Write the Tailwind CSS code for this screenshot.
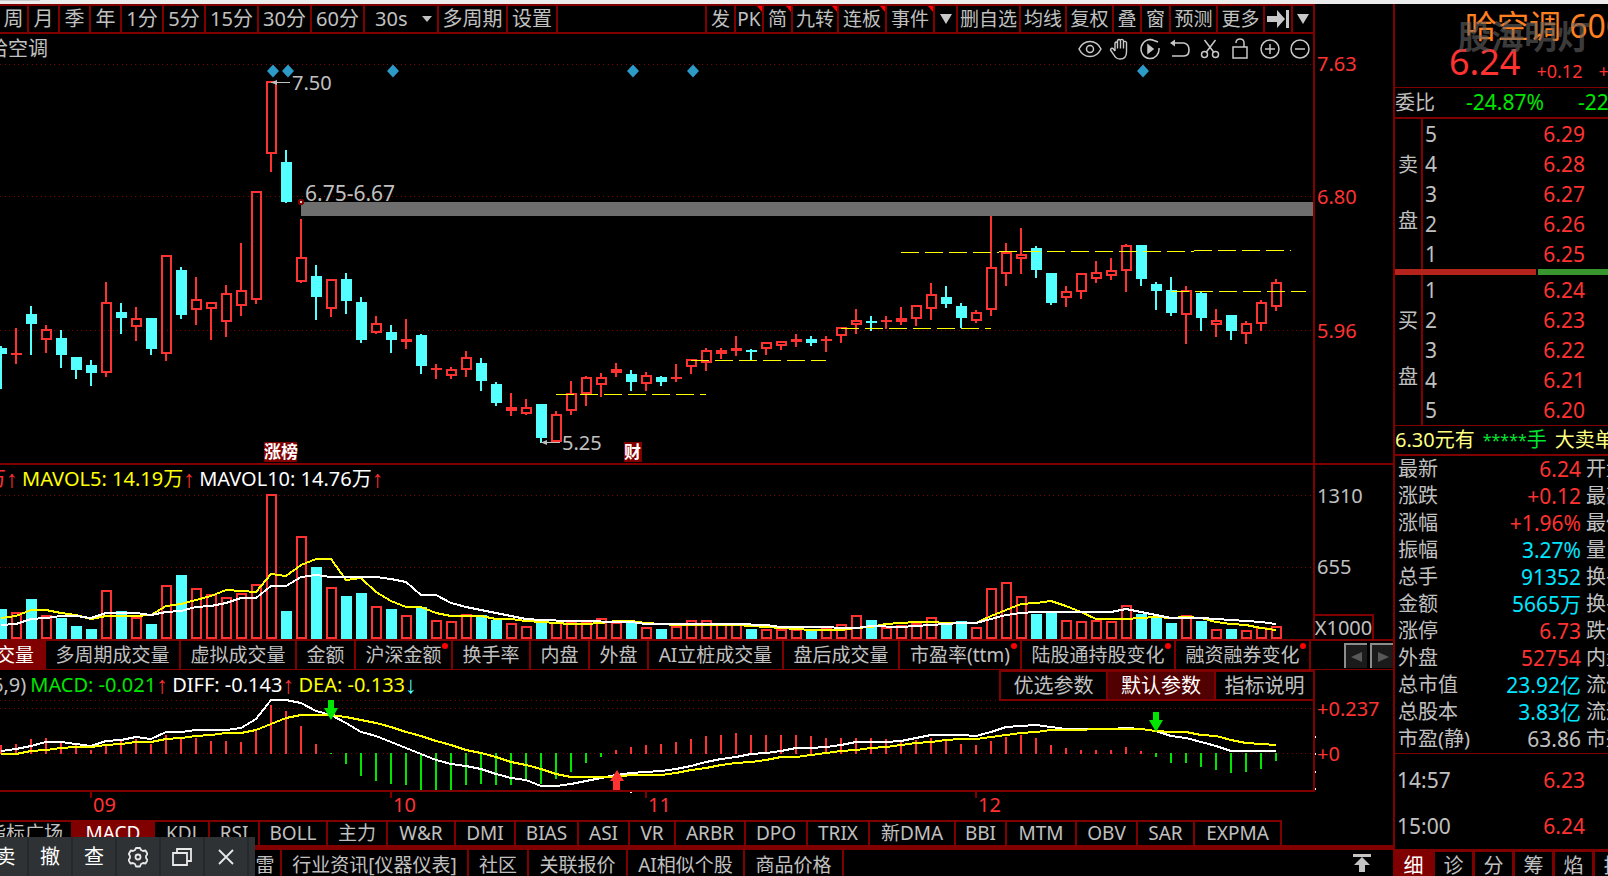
<!DOCTYPE html>
<html lang="zh-CN">
<head>
<meta charset="utf-8">
<title>哈空调 - K线</title>
<script src="https://cdn.jsdelivr.net/npm/@tailwindcss/browser@4"></script>
</head>
<body class="bg-black text-[#c0c0c0] font-['Noto_Sans','Noto_Sans_CJK_SC',sans-serif] text-xl leading-none overflow-hidden">
<div class="flex min-h-screen flex-col">
<div class="h-1 shrink-0 bg-[#ececec]"><div class="h-px w-10 bg-[#c8c8c8]"></div></div>
<div class="flex flex-1">

<main class="flex min-w-0 flex-1 flex-col">
  <!-- period toolbar -->
  <header class="flex h-[30px] items-stretch border-y-2 border-t-[#800000] border-b-[#800000] mr-[78px] whitespace-nowrap">
    <nav class="flex [&>button]:border-r-2 [&>button]:border-[#800000]" aria-label="周期">
      <button class="w-[29px]">周</button>
      <button class="w-[31px]">月</button>
      <button class="w-[31px]">季</button>
      <button class="w-[31px]">年</button>
      <button class="w-[42px]">1分</button>
      <button class="w-[42px]">5分</button>
      <button class="w-[53px]">15分</button>
      <button class="w-[53px]">30分</button>
      <button class="w-[53px]">60分</button>
      <div class="relative w-[74px] border-r-2 border-[#800000]">
        <select aria-label="秒周期" class="h-full w-full appearance-none bg-black pl-[10px]"><option>30s</option></select>
        <svg class="pointer-events-none absolute right-1 top-[9px]" width="12" height="8"><path d="M1 1h10L6 7z" fill="#c0c0c0"/></svg>
      </div>
      <button class="w-[69px]">多周期</button>
      <button class="w-[50px]">设置</button>
    </nav>
    <nav class="ml-auto flex text-[19px] [&>button]:relative [&>button]:border-l-2 [&>button]:border-[#800000]" aria-label="工具">
      <button class="w-[29px]">发</button>
      <button class="w-7">PK<svg class="absolute right-0 top-0" width="5" height="6"><path d="M0 0h5v6z" fill="#f00"/></svg></button>
      <button class="w-[29px]">简<svg class="absolute right-0 top-0" width="5" height="6"><path d="M0 0h5v6z" fill="#f00"/></svg></button>
      <button class="w-[46px]">九转<svg class="absolute right-0 top-0" width="5" height="6"><path d="M0 0h5v6z" fill="#f00"/></svg></button>
      <button class="w-12">连板<svg class="absolute right-0 top-0" width="5" height="6"><path d="M0 0h5v6z" fill="#f00"/></svg></button>
      <button class="w-12">事件<svg class="absolute right-0 top-0" width="5" height="6"><path d="M0 0h5v6z" fill="#f00"/></svg></button>
      <button class="flex w-[23px] items-center justify-center" aria-label="事件菜单"><svg width="14" height="12"><path d="M1 1h12L7 11z" fill="#c8c8c8"/></svg></button>
      <button class="w-[63px]">删自选</button>
      <button class="w-[46px]">均线</button>
      <button class="w-[47px]">复权</button>
      <button class="w-[28px]">叠</button>
      <button class="w-[29px]">窗</button>
      <button class="w-[47px]">预测</button>
      <button class="w-[47px]">更多</button>
      <button class="flex w-7 items-center justify-center" aria-label="最新"><svg class="shrink-0" width="24" height="20"><path d="M1 7h10V1l8 9-8 9v-6H1zM20 1h3v18h-3z" fill="#c8c8c8"/></svg></button>
      <button class="flex w-6 items-center justify-center border-r-2" aria-label="工具菜单"><svg width="14" height="12"><path d="M1 1h12L7 11z" fill="#c8c8c8"/></svg></button>
    </nav>
  </header>

  <!-- candles -->
  <section class="relative h-[431px] border-b-2 border-[#800000]">
    <svg id="k" class="block h-full w-full" font-size="20" fill="#c0c0c0"></svg>
    <div class="absolute inset-x-0 top-0 flex h-[30px] items-center justify-between pr-[78px]">
      <h1 class="-ml-3">哈空调</h1>
      <div class="flex [&>button]:flex [&>button]:h-[30px] [&>button]:w-[30px] [&>button]:items-center [&>button]:justify-center">
        <button aria-label="显示"><svg width="24" height="20" fill="none" stroke="#c8c8c8" stroke-width="1.5"><path d="M1 10C6 0 18 0 23 10C18 20 6 20 1 10z"/><circle cx="12" cy="10" r="3.5"/></svg></button>
        <button aria-label="拖动"><svg width="22" height="22" fill="none" stroke="#c8c8c8" stroke-width="1.4"><path d="M6 13V5q1-2 2.500 0V2.500q1.500-2 3 0V2q1.500-1.500 3 .5V4q2-1.500 3 .5V14q0 7-6.500 7-4 0-6-4L1.500 12q.5-2.500 2.500-1.500L6 13M8.500 5v5.500M11.500 3v7.500M14.500 4v6.500"/></svg></button>
        <button aria-label="回放"><svg width="22" height="22" fill="none" stroke="#c8c8c8" stroke-width="1.5"><path d="M15 2.500A9 9.500 0 1 0 20 10M15 2.500l-4-1M15 2.500l4 1.500"/><path d="M9 7v8l5-4z" fill="#c8c8c8"/></svg></button>
        <button aria-label="撤销"><svg width="22" height="20" fill="none" stroke="#c8c8c8" stroke-width="1.6"><path d="M4 4h11q5 1 5 7t-5 6H3"/><path d="M1 4l5-3.500v7z" fill="#c8c8c8" stroke="none"/></svg></button>
        <button aria-label="剪切"><svg width="20" height="20" fill="none" stroke="#c8c8c8" stroke-width="1.5"><path d="M4.500 1L14 13.500M15.500 1L6 13.500"/><circle cx="4.500" cy="15.500" r="3"/><circle cx="15.500" cy="15.500" r="3"/></svg></button>
        <button aria-label="锁定"><svg width="18" height="22" fill="none" stroke="#c8c8c8" stroke-width="1.500"><path d="M2 9h14v11H2zM5 5q0-4 4-4t4 4v4"/></svg></button>
        <button aria-label="放大"><svg width="22" height="22" fill="none" stroke="#c8c8c8" stroke-width="1.500"><circle cx="11" cy="11" r="9"/><path d="M6 11h10M11 6v10"/></svg></button>
        <button aria-label="缩小"><svg width="22" height="22" fill="none" stroke="#c8c8c8" stroke-width="1.500"><circle cx="11" cy="11" r="9"/><path d="M6 11h10"/></svg></button>
      </div>
    </div>
  </section>

  <!-- volume -->
  <section class="relative h-44 border-b-2 border-[#800000]">
    <svg id="v" class="block h-full w-full" font-size="20" fill="#c0c0c0"></svg>
    <p class="absolute left-0 top-0 flex h-7 items-center gap-1 overflow-hidden whitespace-nowrap [&>span]:flex [&>span]:items-center">
      <span class="-ml-[14px] text-[#ff3232]">万<span class="font-['Liberation_Sans'] text-2xl leading-none">↑</span></span>
      <span class="text-[#ffff00]">MAVOL5: 14.19万<span class="font-['Liberation_Sans'] text-2xl leading-none text-[#ff3232]">↑</span></span>
      <span class="text-white">MAVOL10: 14.76万<span class="font-['Liberation_Sans'] text-2xl leading-none text-[#ff3232]">↑</span></span>
    </p>
    <span class="absolute bottom-0 right-[19px] flex h-[25px] w-[61px] items-center justify-center border-2 border-b-0 border-[#800000]">X1000</span>
  </section>

  <!-- volume indicator tabs -->
  <nav class="flex h-[29px] whitespace-nowrap border-b border-[#800000] text-[19px] [&>button]:relative [&>button]:border-r-2 [&>button]:border-[#800000]" aria-label="成交量指标">
    <button class="flex w-[46px] justify-end bg-[#800000] pr-[10px] items-center overflow-hidden text-white">成交量</button>
    <button class="w-[135px]">多周期成交量</button>
    <button class="w-[116px]">虚拟成交量</button>
    <button class="w-[59px]">金额</button>
    <button class="w-[97px]">沪深金额<i class="absolute right-[3px] top-[2px] size-[6px] rounded-full bg-[#ff0000]"></i></button>
    <button class="w-[78px]">换手率</button>
    <button class="w-[59px]">内盘</button>
    <button class="w-[59px]">外盘</button>
    <button class="w-[135px]">AI立桩成交量</button>
    <button class="w-[116px]">盘后成交量</button>
    <button class="w-[122px]">市盈率(ttm)<i class="absolute right-[3px] top-[2px] size-[6px] rounded-full bg-[#ff0000]"></i></button>
    <button class="w-[154px]">陆股通持股变化<i class="absolute right-[3px] top-[2px] size-[6px] rounded-full bg-[#ff0000]"></i></button>
    <button class="w-[135px]">融资融券变化<i class="absolute right-[3px] top-[2px] size-[6px] rounded-full bg-[#ff0000]"></i></button>
    <div class="ml-auto flex gap-[3px] pt-[2px]">
      <button class="flex h-[25px] w-[23px] items-center justify-center border-l-2 border-t-2 border-[#8c8c8c] bg-[#1a1a1a]" aria-label="向左"><svg width="12" height="10"><path d="M11 0v10L0 5z" fill="#585858"/></svg></button>
      <button class="flex h-[25px] w-[23px] items-center justify-center border-l-2 border-t-2 border-[#8c8c8c] bg-[#1a1a1a]" aria-label="向右"><svg width="12" height="10"><path d="M1 0v10l11-5z" fill="#585858"/></svg></button>
    </div>
  </nav>

  <!-- MACD and dates -->
  <section class="relative h-[150px]">
    <svg id="m" class="block h-full w-full" font-size="20" fill="#ff3232"></svg>
    <p class="absolute left-0 top-0 flex h-[30px] items-center gap-1 whitespace-nowrap overflow-hidden [&>span]:flex [&>span]:items-center">
      <span class="-ml-2">6,9)</span>
      <span class="text-[#00e600]">MACD: -0.021<span class="font-['Liberation_Sans'] text-2xl leading-none text-[#ff3232]">↑</span></span>
      <span class="text-white">DIFF: -0.143<span class="font-['Liberation_Sans'] text-2xl leading-none text-[#ff3232]">↑</span></span>
      <span class="text-[#ffff00]">DEA: -0.133<span class="font-['Liberation_Sans'] text-2xl leading-none text-[#50ffff]">↓</span></span>
    </p>
    <div class="absolute right-[78px] top-0 flex h-[31px] border-2 border-[#800000] bg-black">
      <button class="w-[107px] border-r-2 border-[#800000]">优选参数</button>
      <button class="w-[108px] border-r-2 border-[#800000] bg-[#500000] text-white">默认参数</button>
      <button class="w-[97px]">指标说明</button>
    </div>
  </section>

  <!-- indicator tabs -->
  <nav class="flex h-[30px] whitespace-nowrap border-b-[5px] border-[#800000] text-[19px] [&>button]:border-r-2 [&>button]:border-t-2 [&>button]:border-[#800000]" aria-label="技术指标">
    <button class="flex w-[73px] items-center justify-end pr-2 overflow-hidden">指标广场</button>
    <button class="w-[82px] bg-[#800000] text-white">MACD</button>
    <button class="w-[55px]">KDJ</button>
    <button class="w-[50px]">RSI</button>
    <button class="w-[68px]">BOLL</button>
    <button class="w-[60px]">主力</button>
    <button class="w-[68px]">W&amp;R</button>
    <button class="w-[60px]">DMI</button>
    <button class="w-[63px]">BIAS</button>
    <button class="w-[51px]">ASI</button>
    <button class="w-[46px]">VR</button>
    <button class="w-[70px]">ARBR</button>
    <button class="w-[62px]">DPO</button>
    <button class="w-[62px]">TRIX</button>
    <button class="w-[86px]">新DMA</button>
    <button class="w-[51px]">BBI</button>
    <button class="w-[70px]">MTM</button>
    <button class="w-[61px]">OBV</button>
    <button class="w-[57px]">SAR</button>
    <button class="w-[87px]">EXPMA</button>
  </nav>

  <!-- bottom links and order bar -->
  <div class="relative flex min-h-[26px] flex-1 items-stretch whitespace-nowrap">
    <nav class="flex pl-[250px] text-[19px] [&>a]:flex [&>a]:items-center [&>a]:justify-center [&>a]:border-r-2 [&>a]:border-[#800000] [&>a]:pt-1" aria-label="资讯">
      <a href="#" class="w-8">雷</a>
      <a href="#" class="w-[187px]">行业资讯[仪器仪表]</a>
      <a href="#" class="w-[60px]">社区</a>
      <a href="#" class="w-[99px]">关联报价</a>
      <a href="#" class="w-[117px]">AI相似个股</a>
      <a href="#" class="w-[99px]">商品价格</a>
    </nav>
    <button class="ml-auto mr-[22px] flex w-[18px] items-center" aria-label="置顶"><svg width="18" height="20"><path d="M0 1h18v3H0zM9 4l8 8h-5v7H6v-7H1z" fill="#c4c4c4"/></svg></button>
    <div class="absolute bottom-0 left-0 flex h-[39px] bg-[#2e3235] pr-[6px] text-white [&>button]:flex [&>button]:items-center [&>button]:justify-center [&>button]:border-r-2 [&>button]:border-[#25282c]">
      <button class="w-[29px] overflow-hidden"><span class="-ml-4">卖</span></button>
      <button class="w-11">撤</button>
      <button class="w-11">查</button>
      <button class="w-11" aria-label="设置"><svg width="20" height="22" viewBox="0 0 20 22" fill="none" stroke="#e8e8e8" stroke-width="1.800" stroke-linejoin="round"><path d="M7 4L8 2h4l1 2 2 1 2.500-.5 2 3.500L18 10v2l1.500 2-2 3.500L15 17l-2 1-1 2.500H8L7 18l-2-1-2.500.5-2-3.500L2 12v-2L.8 8l2-3.500L5 5z"/><circle cx="10" cy="11" r="2.500"/></svg></button>
      <button class="w-11" aria-label="还原"><svg width="20" height="18" fill="none" stroke="#e8e8e8" stroke-width="1.800"><path d="M1 5h14v12H1zM5 5V1h14v12h-4"/></svg></button>
      <button class="w-11" aria-label="关闭"><svg width="16" height="16" stroke="#e8e8e8" stroke-width="1.800"><path d="M1 1l14 14M15 1L1 15"/></svg></button>
    </div>
  </div>
</main>

<aside class="flex w-[215px] shrink-0 flex-col overflow-hidden whitespace-nowrap border-l-2 border-[#800000]">
  <div class="relative h-[84px] border-b border-[#800000] pl-[54px]">
    <div class="pl-4 pt-[6px] text-[32px] text-[#ff8020]">哈空调 600202</div>
    <div class="flex items-end gap-4 text-[#ff3232]"><span class="text-4xl">6.24</span><span class="text-lg leading-[22px]">+0.12</span><span class="text-lg leading-[22px]">+1.96%</span></div>
    <div class="absolute left-[63px] top-4 text-[33px] font-bold text-[#646464]/60">股海明灯</div>
  </div>
  <div class="flex h-[31px] items-center border-b-2 border-[#800000] text-[21px] text-[#00e600]"><span class="w-[71px] shrink-0 text-xl text-[#c0c0c0]">委比</span><span class="w-28 shrink-0">-24.87%</span><span>-2295</span></div>
  <div class="flex h-[150px]">
    <div class="flex w-7 flex-col items-center border-r-2 border-[#800000] pt-9"><span>卖</span><span class="pt-9">盘</span></div>
    <table class="w-[162px] text-[21px]"><tbody>
      <tr><td class="pl-[2px]">5</td><td class="text-right text-[#ff3232]">6.29</td></tr>
      <tr><td class="pl-[2px]">4</td><td class="text-right text-[#ff3232]">6.28</td></tr>
      <tr><td class="pl-[2px]">3</td><td class="text-right text-[#ff3232]">6.27</td></tr>
      <tr><td class="pl-[2px]">2</td><td class="text-right text-[#ff3232]">6.26</td></tr>
      <tr><td class="pl-[2px]">1</td><td class="text-right text-[#ff3232]">6.25</td></tr>
    </tbody></table>
  </div>
  <div class="flex h-[6px] gap-[2px]"><div class="w-[141px] bg-[#b4231c]"></div><div class="flex-1 bg-[#37962d]"></div></div>
  <div class="flex h-[151px] border-b border-[#800000]">
    <div class="flex w-7 flex-col items-center border-r-2 border-[#800000] pt-9"><span>买</span><span class="pt-9">盘</span></div>
    <table class="w-[162px] text-[21px]"><tbody>
      <tr><td class="pl-[2px]">1</td><td class="text-right text-[#ff3232]">6.24</td></tr>
      <tr><td class="pl-[2px]">2</td><td class="text-right text-[#ff3232]">6.23</td></tr>
      <tr><td class="pl-[2px]">3</td><td class="text-right text-[#ff3232]">6.22</td></tr>
      <tr><td class="pl-[2px]">4</td><td class="text-right text-[#ff3232]">6.21</td></tr>
      <tr><td class="pl-[2px]">5</td><td class="text-right text-[#ff3232]">6.20</td></tr>
    </tbody></table>
  </div>
  <div class="flex h-[30px] items-center gap-2 border-b-2 border-[#800000] text-[#ffff80]"><span>6.30元有</span><span class="flex items-center text-[#00e632]"><span class="text-base">*****</span>手</span><span>大卖单</span></div>
  <table class="h-[298px] w-[232px] table-fixed border-b border-[#800000]"><tbody>
    <tr><td class="w-[86px] pl-[3px]">最新</td><td class="w-[100px] text-right text-[21px] text-[#ff3232]">6.24</td><td class="pl-[5px]">开盘</td></tr>
    <tr><td class="pl-[3px]">涨跌</td><td class="text-right text-[21px] text-[#ff3232]">+0.12</td><td class="pl-[5px]">最高</td></tr>
    <tr><td class="pl-[3px]">涨幅</td><td class="text-right text-[21px] text-[#ff3232]">+1.96%</td><td class="pl-[5px]">最低</td></tr>
    <tr><td class="pl-[3px]">振幅</td><td class="text-right text-[21px] text-[#00e6ff]">3.27%</td><td class="pl-[5px]">量比</td></tr>
    <tr><td class="pl-[3px]">总手</td><td class="text-right text-[21px] text-[#00e6ff]">91352</td><td class="pl-[5px]">换手</td></tr>
    <tr><td class="pl-[3px]">金额</td><td class="text-right text-[21px] text-[#00e6ff]">5665万</td><td class="pl-[5px]">换手</td></tr>
    <tr><td class="pl-[3px]">涨停</td><td class="text-right text-[21px] text-[#ff3232]">6.73</td><td class="pl-[5px]">跌停</td></tr>
    <tr><td class="pl-[3px]">外盘</td><td class="text-right text-[21px] text-[#ff3232]">52754</td><td class="pl-[5px]">内盘</td></tr>
    <tr><td class="pl-[3px]">总市值</td><td class="text-right text-[21px] text-[#00e6ff]">23.92亿</td><td class="pl-[5px]">流值</td></tr>
    <tr><td class="pl-[3px]">总股本</td><td class="text-right text-[21px] text-[#00e6ff]">3.83亿</td><td class="pl-[5px]">流通</td></tr>
    <tr><td class="pl-[3px]">市盈(静)</td><td class="text-right text-[21px]">63.86</td><td class="pl-[5px]">市盈</td></tr>
  </tbody></table>
  <table class="mt-[3px] h-[92px] w-[190px] text-[21px]"><tbody>
    <tr><td class="pl-[2px]">14:57</td><td class="text-right text-[#ff3232]">6.23</td></tr>
    <tr><td class="pl-[2px]">15:00</td><td class="text-right text-[#ff3232]">6.24</td></tr>
  </tbody></table>
  <nav class="flex flex-1 border-t-[3px] border-[#800000] [&>button]:w-10 [&>button]:shrink-0 [&>button]:border-r-[3px] [&>button]:border-[#800000] [&>button]:pt-1" aria-label="明细">
    <button class="bg-[#800000] text-white">细</button>
    <button>诊</button>
    <button>分</button>
    <button>筹</button>
    <button>焰</button>
    <button>扩</button>
  </nav>
</aside>
</div>
</div>

<script>
const R='#ff3232',C='#54ffff',D='#800000',Y='#ffff00',G='#00e600';
const rect=(x,y,w,h,f)=>`<rect x="${x}" y="${y}" width="${w}" height="${h}" fill="${f}"/>`;
const box=(k,t,b)=>b-t<5?rect(15*k-4,t,11,b-t,R):`<rect x="${15*k-3}" y="${t+1}" width="9" height="${b-t-2}" fill="none" stroke="${R}" stroke-width="2"/>`;
const right=(y,h)=>`<svg x="100%" overflow="visible">${rect(-80,y,2,h,D)}</svg>`;
const dots=y=>`<svg y="${y}" height="1" width="100%"><line x2="1312" y1=".5" y2=".5" stroke="${D}" stroke-dasharray="1 4 1 3"/></svg>`;
const text=(x,y,s,f)=>`<text x="${x}" y="${y}"${f?` fill="${f}"`:''}>${s}</text>`;
const axis=(y,s,f)=>`<svg x="100%" overflow="visible">${text(-76,y,s,f)}</svg>`;
const line=(s,c)=>`<polyline fill="none" stroke="${c}" stroke-width="2" points="${s.trim().split(/\s+/).map(p=>{const[k,y]=p.split(':');return(15*k+1)+','+y}).join(' ')}"/>`;
const up='shape-rendering="crispEdges"';

// high, body top, body bottom, low; c = falling day
const candles=`346 348 354 389 c|328 353 355 364|306 314 324 355 c|325 329 340 353|330 338 355 368 c|357 357 370 379 c|360 365 373 386 c|282 302 373 377|303 312 318 334 c|307 318 327 341|318 318 349 355 c|255 255 354 361|267 270 315 319 c|277 299 310 325|302 302 309 340|285 293 322 337|243 290 306 316|191 191 300 304|81 81 154 172|150 162 202 203 c|219 257 282 283|265 276 297 320 c|279 279 309 317|273 279 301 314 c|297 302 340 343 c|316 323 333 334|325 332 340 353 c|319 339 342 349|334 335 366 374 c|364 368 370 379|367 369 376 379|351 357 370 377|358 363 381 391 c|382 384 403 406 c|393 407 411 416|399 407 414 415|404 404 438 443 c|411 414 442 442|381 393 411 415|376 377 394 406|373 377 385 397|363 369 373 377|370 374 382 391 c|372 375 384 391|376 377 382 386 c|364 377 379 382|359 359 367 374|348 350 363 371|348 350 354 359|336 348 351 356|349 350 352 360 c|342 342 349 355|341 341 346 350|334 339 342 347|336 339 343 346 c|336 339 341 352|327 327 336 343|309 320 325 334|316 321 323 331 c|316 320 322 329|307 318 322 325|305 305 319 326|283 294 309 320|286 297 304 308 c|303 306 318 328 c|310 312 321 323|216 267 310 316|243 252 274 286|228 254 259 274|246 248 270 278 c|273 273 303 305 c|286 291 298 307|273 273 292 299|261 272 279 283|258 270 276 280|244 245 271 292|245 245 279 286 c|282 284 291 310 c|277 290 313 316 c|286 290 315 344|292 293 318 331 c|309 320 325 337|315 315 331 340 c|321 323 334 344|300 302 324 331|279 282 307 311`.split('|').map(s=>s.split(' '));
let s='';
s+=dots(64)+dots(196)+dots(330);
candles.forEach(([h,t,b,l,c],k)=>{
  h=+h;t=+t;b=+b;l=+l;const col=c?C:R;
  s+=rect(15*k,h,2,t-h,col)+rect(15*k,b,2,l-b,col)+(c?rect(15*k-4,t,11,b-t,C):box(k,t,b));
});
s+=rect(301,202,1013,14,'#6e6e6e');
s+=`<circle cx="301" cy="202" r="2" fill="#ccc" stroke="${D}" stroke-width="2"/>`;
[[556,706,394],[691,826,360],[841,991,328],[901,999,252],[999,1194,251],[1194,1291,250],[1171,1306,291]].forEach(([a,b,y])=>s+=`<line x1="${a}" x2="${b}" y1="${y+.5}" y2="${y+.5}" stroke="${Y}" stroke-dasharray="18 6"/>`);
let o='';
[273,288,393,633,693,1143].forEach(x=>o+=`<path d="M${x} 64.500l6 6.500-6 6.500-6-6.500z" fill="#2d9bc8"/>`);
[[271,82.5],[541,442.5]].forEach(([x,y])=>o+=`<path d="M${x} ${y}h19" stroke="#c0c0c0"/><path d="M${x} ${y}l6-2.500v5z"/>`);
o+=text(292,90,'7.50')+`<g font-size="21">${text(305,201,'6.75-6.67')}</g>`+text(562,450,'5.25');
o+=rect(264,442,33,20,D)+rect(624,442,18,20,D)+`<g font-size="17" fill="#fff" font-weight="bold"><text x="264" y="458">涨榜</text><text x="624" y="458">财</text></g>`;
o+=axis(71,'7.63',R)+axis(204,'6.80',R)+axis(338,'5.96',R);
document.getElementById('k').innerHTML=`<g transform="translate(0,-34)"><g ${up}>${s}${right(34,430)}</g>${o}</g>`;

const vol=[609,612,599,615,618,626,629,590,611,617,624,585,575,588,594,597,593,584,494,611,536,567,587,596,593,606,609,615,607,620,621,614,615,620,623,626,623,622,622,621,618,622,622,627,629,626,620,620,623,624,629,629,629,629,630,628,624,615,620,627,625,623,617,623,621,627,588,582,596,614,612,620,621,620,621,605,614,618,623,615,621,629,629,630,627,626];
s=dots(495)+dots(567);
vol.forEach((y,k)=>s+=candles[k][4]?rect(15*k-4,y,11,639-y,C):box(k,y,639));
s+=line('0:618 1:616 2:610 3:610 4:613 5:615 6:619 7:616 8:616 9:616 10:615 11:606 12:604 13:600 14:596 15:590 16:591 17:592 18:574 19:576 20:565 21:559 22:559 23:580 24:578 25:592 26:601 27:607 28:607 29:613 30:616 31:616 32:616 33:619 34:619 35:621 36:622 38:624 39:624 40:623 41:621 42:621 43:623 44:624 45:625 49:625 50:626 51:627 53:629 54:630 56:630 57:628 58:627 59:624 60:623 61:622 62:622 63:623 65:623 66:616 67:610 68:604 69:603 70:601 71:606 72:612 73:619 75:619 76:618 77:617 78:618 79:617 80:618 81:622 82:624 83:625 84:628 85:630',Y);
s+=line('0:625 1:624 2:619 3:618 4:616 5:616 6:618 7:613 9:613 10:615 11:612 12:611 13:607 14:606 15:603 16:598 17:598 18:586 19:586 20:577 21:575 22:577 25:577 26:579 27:582 28:595 29:595 30:603 31:607 32:610 33:613 34:616 35:619 36:620 38:621 42:622 43:624 49:624 51:625 52:627 54:627 57:628 58:626 60:627 62:625 64:623 65:623 66:619 67:615 68:613 69:612 74:612 75:609 76:612 77:615 78:618 80:618 81:619 83:621 84:622 85:624','#fff');
document.getElementById('v').innerHTML=`<g transform="translate(0,-465)"><g ${up}>${s}${right(465,175)}</g>${axis(503,'1310')}${axis(574,'655')}</g>`;

const macd=[745,744,739,738,742,744,750,744,740,739,744,735,739,738,741,741,742,731,705,711,726,744,754,764,776,781,784,785,790,790,790,785,784,785,785,781,784,779,772,763,757,750,747,745,744,742,739,736,735,733,735,735,735,735,736,738,738,738,738,739,740,740,738,740,744,745,741,737,735,738,745,748,750,750,750,747,751,757,763,763,767,770,773,772,769,761];
s=dots(700)+dots(708)+dots(753);
macd.forEach((y,k)=>s+=y<753?rect(15*k,y,2,754-y,R):rect(15*k,753,2,y-753,G));
s+=line('0:751 1:749 2:746 3:742 4:742 5:744 6:746 7:741 8:740 9:737 10:739 11:732 12:732 13:730 15:730 16:728 17:719 18:700 19:700 20:703 21:711 22:715 23:723 24:732 25:736 26:742 27:748 28:754 29:760 30:764 31:766 32:769 33:774 34:778 35:780 36:786 37:786 38:784 39:781 40:778 41:775 42:773 43:772 44:771 45:769 46:766 47:762 48:759 49:757 50:754 51:753 52:751 53:748 54:748 55:747 56:745 57:742 59:742 60:741 61:738 62:735 64:735 65:736 66:732 67:727 68:726 69:725 70:727 71:729 74:729 75:728 76:729 77:731 78:736 79:738 80:742 81:746 82:751 85:751','#fff');
s+=line('0:754 1:754 2:751 3:750 4:748 5:747 6:747 7:745 8:744 9:742 10:742 11:739 12:738 13:736 14:735 15:733 16:733 17:730 18:724 19:718 20:715 22:715 23:717 24:720 25:723 26:727 27:732 28:736 29:741 30:745 31:750 32:753 33:757 34:762 35:765 36:769 37:774 38:777 41:777 42:775 44:775 45:773 46:770 47:768 48:765 49:763 50:762 51:760 52:757 53:757 54:755 55:753 56:751 57:750 58:748 59:747 60:745 61:743 62:742 63:740 64:739 65:739 66:737 67:735 68:733 69:732 70:730 75:729 76:729 77:731 78:732 79:732 80:735 81:736 82:740 83:743 84:744 85:745',Y);
s+=rect(0,790,1315,2,D)+right(700,92);
[736,753,771,788].forEach(y=>s+=`<svg x="100%" overflow="visible">${rect(-78,y,1,2,'#fff')}</svg>`);
s+=rect(630,792,2,1,'#fff');
o='';
[[90,'09'],[390,'10'],[645,'11'],[975,'12']].forEach(([x,l])=>{s+=rect(x,792,2,6,D);o+=text(x+3,812,l)});
[[331,700],[1156,712]].forEach(([x,y])=>o+=`<path d="M${x-3} ${y}h6v8h4l-7 12-7-12h4z" fill="${G}"/>`);
o+=`<path d="M613 790h7v-9h4l-7-11-7 11h3z" fill="${R}"/>`;
o+=axis(716,'+0.237')+axis(761,'+0');
document.getElementById('m').innerHTML=`<g transform="translate(0,-670)"><g ${up}>${s}</g>${o}</g>`;
</script>
</body>
</html>
